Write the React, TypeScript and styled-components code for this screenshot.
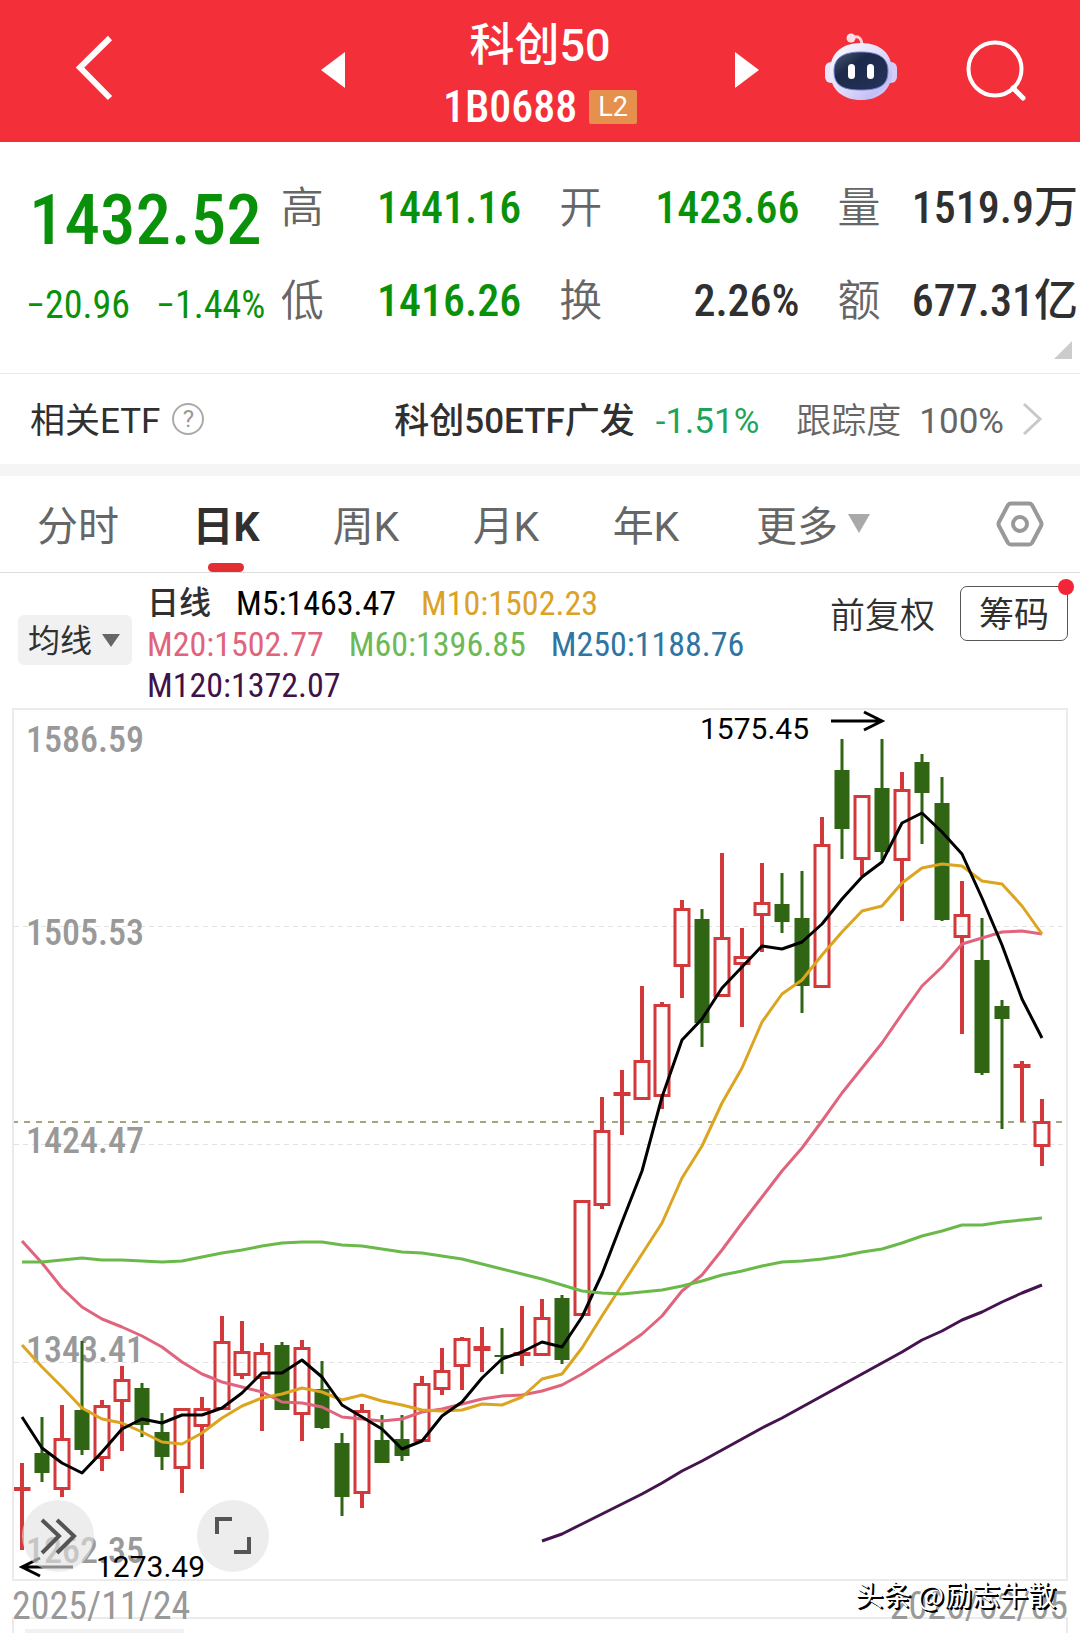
import React from "react";
import styled, { createGlobalStyle, css } from "styled-components";

const textFont = `Roboto, "Noto Sans CJK SC", sans-serif`;
const numberFont = `"Roboto Condensed", Roboto, "Noto Sans CJK SC", sans-serif`;

const color = {
  brand: "#f32f39",
  fall: "#099209",
  ink: "#303030",
  label: "#666",
  axis: "#999",
  line: "#ebebeb",
  up: "#d3393b",
  down: "#2f6513",
};

const GlobalStyle = createGlobalStyle`
  *, *::before, *::after { box-sizing: border-box; }
  body { margin: 0; background: #fff; color: ${color.ink}; font-family: ${textFont}; }
  button, select { font: inherit; color: inherit; background: none; border: 0; padding: 0; margin: 0; }
  h1, p, dl, dd, dt { margin: 0; font-weight: inherit; }
  svg { display: block; }
`;

const Page = styled.main`
  position: relative;
  overflow: hidden;
`;

/* ---------- header ---------- */

const Header = styled.header`
  display: grid;
  grid-template-columns: 1fr 438px 1fr;
  align-items: center;
  height: 142px;
  background: ${color.brand};
  color: #fff;
`;

const BackButton = styled.button`
  justify-self: start;
  margin-left: 74px;
`;

const Switcher = styled.div`
  display: flex;
  align-items: center;
  justify-content: space-between;
`;

const TitleBlock = styled.div`
  display: flex;
  flex-direction: column;
  align-items: center;
  padding-top: 12px;
`;

const Title = styled.h1`
  font-size: 45px;
  line-height: 60px;
  font-weight: 500;
`;

const CodeRow = styled.p`
  display: flex;
  align-items: center;
  gap: 12px;
  font: 500 44px/62px ${numberFont};
`;

const Level = styled.span`
  padding: 0 9px;
  border-radius: 2px;
  background: #e5904c;
  font: 400 27px/34px ${textFont};
`;

const HeaderTools = styled.div`
  display: flex;
  align-items: center;
  justify-content: flex-end;
  gap: 68px;
  padding-right: 54px;
`;

/* ---------- quote ---------- */

const Quote = styled.section`
  position: relative;
  display: flex;
  height: 232px;
  border-bottom: 1px solid ${color.line};
`;

const Headline = styled.div`
  width: 26%;
  padding: 38px 0 0 26px;
  color: ${color.fall};
  font-family: ${numberFont};
  font-weight: 500;
  white-space: nowrap;
`;

const Price = styled.p`
  padding-left: 3px;
  font-size: 71px;
  line-height: 80px;
`;

const Changes = styled.p`
  display: flex;
  gap: 26px;
  margin-top: 25px;
  font-size: 38px;
  line-height: 40px;
  font-weight: 400;
`;

const Stats = styled.dl`
  flex: 1;
  display: grid;
  grid-template-columns: repeat(3, 1fr);
  grid-auto-rows: 93px;
  column-gap: 38px;
  padding: 17px 2px 0 0;
`;

const Stat = styled.div`
  display: flex;
  align-items: center;
  justify-content: space-between;
  white-space: nowrap;
`;

const StatLabel = styled.dt`
  padding-bottom: 4px;
  color: ${color.label};
  font-size: 43px;
  font-weight: 350;
`;

const StatValue = styled.dd<{ $fall?: boolean }>`
  padding-top: 4px;
  color: ${(p) => (p.$fall ? color.fall : color.ink)};
  font: 500 44px/60px ${numberFont};
`;

const Corner = styled.span`
  position: absolute;
  right: 8px;
  bottom: 14px;
  border-left: 18px solid transparent;
  border-bottom: 18px solid #ccc;
`;

/* ---------- related ETF ---------- */

const EtfRow = styled.section`
  display: flex;
  align-items: center;
  height: 102px;
  padding: 0 36px 0 30px;
  border-bottom: 12px solid #f5f5f5;
  font-size: 35px;
  line-height: 48px;
  white-space: nowrap;
`;

const EtfLabel = styled.span`
  padding-top: 5px;
`;

const HelpButton = styled.button`
  width: 32px;
  height: 32px;
  margin-left: 12px;
  border: 2px solid #aaa;
  border-radius: 50%;
  color: #999;
  font-size: 24px;
  line-height: 28px;
`;

const EtfLink = styled.a`
  display: flex;
  align-items: center;
  margin-left: auto;
  color: inherit;
  text-decoration: none;
`;

const EtfTexts = styled.span`
  display: flex;
  align-items: baseline;
  padding-top: 5px;
`;

const EtfName = styled.span`
  font-weight: 500;
`;

const EtfChange = styled.span`
  margin: 0 37px 0 21px;
  color: #1fa35b;
`;

const TrackLabel = styled.span`
  margin-right: 18px;
  color: ${color.label};
  font-weight: 350;
`;

const TrackValue = styled.span`
  margin-right: 18px;
  color: ${color.label};
`;

/* ---------- period tabs ---------- */

const Tabs = styled.nav`
  display: grid;
  grid-template-columns: 156fr 140fr 140fr 140fr 140fr 194fr 170fr;
  height: 97px;
  border-bottom: 1px solid #ddd;
`;

const Tab = styled.button<{ $active?: boolean }>`
  position: relative;
  display: flex;
  align-items: center;
  justify-content: center;
  gap: 10px;
  padding-bottom: 2px;
  color: ${color.label};
  font-size: 41px;
  font-weight: 400;
  ${(p) =>
    p.$active &&
    css`
      color: ${color.ink};
      font-weight: 700;
      &::after {
        content: "";
        position: absolute;
        bottom: 0;
        width: 36px;
        height: 9px;
        border-radius: 5px;
        background: #e12f32;
      }
    `}
`;

const SettingsButton = styled.button`
  justify-self: end;
  margin-right: 36px;
`;

/* ---------- averages ---------- */

const Averages = styled.section`
  display: flex;
  align-items: flex-start;
  height: 135px;
  padding: 10px 12px 0 18px;
`;

const Picker = styled.label`
  position: relative;
  margin-top: 32px;
`;

const PickerSelect = styled.select`
  appearance: none;
  display: block;
  width: 114px;
  height: 50px;
  padding: 2px 0 0 10px;
  border-radius: 6px;
  background: #f1f1f1;
  font-size: 32px;
`;

const PickerArrow = styled.svg`
  position: absolute;
  right: 12px;
  top: 19px;
  pointer-events: none;
`;

const Legend = styled.div`
  flex: 1;
  display: flex;
  flex-wrap: wrap;
  column-gap: 25px;
  padding: 0 42px 0 15px;
  font: 400 34px/41px ${numberFont};
  white-space: nowrap;
`;

const LegendTitle = styled.span`
  font-size: 32px;
  font-weight: 500;
`;

const LegendItem = styled.span<{ $color: string }>`
  color: ${(p) => p.$color};
`;

const Adjust = styled.button`
  height: 42px;
  margin-top: 13px;
  font-size: 35px;
  line-height: 42px;
  font-weight: 350;
`;

const ChipsButton = styled.button`
  position: relative;
  width: 108px;
  height: 55px;
  margin-left: 25px;
  margin-top: 3px;
  border: 1px solid #555;
  border-radius: 7px;
  font-size: 35px;
  line-height: 53px;
  padding-top: 2px;
  &::after {
    content: "";
    position: absolute;
    top: -8px;
    right: -7px;
    width: 16px;
    height: 16px;
    border-radius: 50%;
    background: #f32538;
  }
`;

/* ---------- chart ---------- */

const ChartFrame = styled.section`
  position: relative;
  margin: 0 12px;
  border: 2px solid ${color.line};
`;

const ChartSvg = styled.svg`
  width: 100%;
  height: auto;
`;

const AxisText = styled.text`
  fill: ${color.axis};
  font: 500 36px ${numberFont};
`;

const MarkText = styled.text`
  fill: #000;
  font: 400 30px ${textFont};
`;

const RoundButton = styled.button<{ $left: number }>`
  position: absolute;
  left: ${(p) => p.$left}px;
  bottom: 7px;
  width: 72px;
  height: 72px;
  border-radius: 50%;
  background: rgba(226, 226, 226, 0.62);
`;

const Dates = styled.div`
  position: relative;
  display: flex;
  justify-content: space-between;
  height: 36px;
  margin: 0 12px;
  color: ${color.axis};
  font: 400 38px/50px ${numberFont};
`;

const Watermark = styled.span`
  position: absolute;
  right: 12px;
  top: -7px;
  color: #fff;
  font: 400 28px/40px "Noto Sans CJK SC", sans-serif;
  text-shadow: 1px 1px 0 #000, 2px 2px 0 #000;
`;

const NextPanel = styled.section`
  height: 16px;
  margin: 0 12px;
  padding: 10px 11px 0;
  border: 2px solid ${color.line};
  border-bottom: 0;
`;

const PanelTab = styled.div`
  width: 159px;
  height: 4px;
  background: #f1f1f1;
`;

/* ---------- data ---------- */

type Candle = [kind: "u" | "d", high: number, top: number, bottom: number, low: number];

const candles: Candle[] = [
  ["u", 1463, 1488, 1490, 1550], ["d", 1417, 1453, 1473, 1482], ["u", 1405, 1438, 1490, 1497],
  ["d", 1341, 1410, 1450, 1455], ["u", 1400, 1405, 1459, 1471], ["u", 1366, 1379, 1402, 1451],
  ["d", 1383, 1388, 1425, 1437], ["d", 1413, 1432, 1457, 1470], ["u", 1408, 1408, 1469, 1493],
  ["u", 1397, 1408, 1427, 1469], ["u", 1316, 1341, 1410, 1410], ["u", 1321, 1351, 1376, 1379],
  ["u", 1343, 1352, 1379, 1431], ["d", 1342, 1345, 1410, 1410], ["u", 1340, 1347, 1415, 1441],
  ["d", 1361, 1389, 1428, 1429], ["d", 1433, 1443, 1497, 1516], ["u", 1404, 1410, 1494, 1508],
  ["d", 1415, 1440, 1463, 1463], ["d", 1415, 1439, 1456, 1461], ["u", 1376, 1383, 1442, 1442],
  ["u", 1348, 1370, 1390, 1395], ["u", 1337, 1338, 1367, 1390], ["u", 1327, 1347, 1350, 1372],
  ["d", 1328, 1355, 1357, 1374], ["u", 1306, 1353, 1355, 1366], ["u", 1299, 1317, 1356, 1356],
  ["d", 1295, 1298, 1360, 1364], ["u", 1200, 1200, 1316, 1316], ["u", 1097, 1130, 1206, 1209],
  ["u", 1070, 1093, 1095, 1135], ["u", 986, 1060, 1100, 1100], ["u", 1002, 1004, 1097, 1109],
  ["u", 900, 908, 967, 998], ["d", 909, 919, 1023, 1047], ["u", 853, 937, 997, 997],
  ["u", 928, 956, 965, 1027], ["u", 863, 902, 916, 952], ["d", 873, 904, 922, 933],
  ["d", 871, 918, 986, 1013], ["u", 817, 844, 988, 988], ["d", 739, 770, 829, 859],
  ["u", 795, 795, 860, 876], ["d", 739, 788, 852, 860], ["u", 772, 789, 861, 921],
  ["d", 754, 762, 793, 844], ["d", 777, 803, 920, 921], ["u", 881, 914, 938, 1034],
  ["d", 918, 960, 1073, 1075], ["d", 1000, 1006, 1019, 1129], ["u", 1061, 1065, 1067, 1122],
  ["u", 1099, 1121, 1147, 1166],
];

const averages = [
  {
    stroke: "#e0647c", width: 3, start: 0,
    ys: [1241, 1263, 1288, 1307, 1319, 1327, 1336, 1347, 1362, 1374, 1382, 1387, 1392, 1402, 1403, 1407, 1417, 1419, 1421, 1419, 1412, 1409, 1404, 1399, 1396, 1395, 1391, 1385, 1374, 1361, 1348, 1334, 1316, 1291, 1275, 1250, 1223, 1197, 1171, 1148, 1121, 1093, 1068, 1043, 1014, 986, 967, 944, 938, 932, 931, 934],
  },
  {
    stroke: "#dba520", width: 3, start: 0,
    ys: [1345, 1367, 1387, 1408, 1419, 1423, 1432, 1442, 1444, 1433, 1418, 1406, 1398, 1394, 1388, 1392, 1400, 1395, 1401, 1405, 1410, 1411, 1410, 1404, 1405, 1397, 1379, 1374, 1348, 1316, 1285, 1254, 1223, 1178, 1146, 1103, 1068, 1022, 994, 980, 955, 932, 911, 906, 883, 868, 864, 866, 881, 884, 906, 934],
  },
  {
    stroke: "#000", width: 3, start: 0,
    ys: [1417, 1448, 1463, 1473, 1452, 1429, 1419, 1423, 1415, 1415, 1408, 1393, 1373, 1373, 1360, 1377, 1405, 1417, 1429, 1449, 1441, 1416, 1402, 1378, 1359, 1352, 1342, 1347, 1317, 1274, 1222, 1171, 1097, 1040, 1019, 988, 967, 946, 949, 942, 924, 899, 877, 862, 823, 813, 832, 854, 898, 945, 999, 1038],
  },
  {
    stroke: "#6cb94b", width: 3, start: 0,
    ys: [1262, 1262, 1260, 1258, 1260, 1260, 1261, 1262, 1261, 1257, 1253, 1250, 1246, 1243, 1242, 1242, 1245, 1246, 1249, 1252, 1253, 1256, 1259, 1264, 1269, 1274, 1279, 1285, 1291, 1293, 1294, 1292, 1290, 1286, 1281, 1275, 1271, 1266, 1262, 1261, 1259, 1256, 1252, 1249, 1243, 1236, 1231, 1225, 1225, 1222, 1220, 1218],
  },
  {
    stroke: "#45134e", width: 3, start: 26,
    ys: [1541, 1534, 1524, 1514, 1504, 1494, 1483, 1471, 1461, 1450, 1439, 1428, 1418, 1407, 1396, 1385, 1374, 1363, 1352, 1340, 1331, 1320, 1312, 1302, 1293, 1285],
  },
];

const xAt = (i: number) => 22 + 20 * i;

const axisLabels: [string, number][] = [
  ["1586.59", 752], ["1505.53", 945], ["1424.47", 1153], ["1343.41", 1362], ["1262.35", 1563],
];

const legend: [string, string][] = [
  ["M5:1463.47", "#000"], ["M10:1502.23", "#dba226"],
  ["M20:1502.77", "#e0647c"], ["M60:1396.85", "#6cb955"], ["M250:1188.76", "#2f75a3"],
  ["M120:1372.07", "#40124a"],
];

const stats: [string, string, boolean][] = [
  ["高", "1441.16", true], ["开", "1423.66", true], ["量", "1519.9万", false],
  ["低", "1416.26", true], ["换", "2.26%", false], ["额", "677.31亿", false],
];

/* ---------- drawings ---------- */

const Robot = () => (
  <svg width="72" height="76" viewBox="0 0 72 76" aria-hidden="true">
    <defs>
      <linearGradient id="shell" x1="0" y1="0" x2="1" y2="1">
        <stop offset="0" stopColor="#fff" />
        <stop offset="0.55" stopColor="#dcd8fa" />
        <stop offset="0.8" stopColor="#c4bff5" />
        <stop offset="1" stopColor="#f5cfe6" />
      </linearGradient>
      <linearGradient id="visor" x1="0" y1="0" x2="1" y2="1">
        <stop offset="0" stopColor="#4c5877" />
        <stop offset="0.35" stopColor="#1d2949" />
        <stop offset="1" stopColor="#25335c" />
      </linearGradient>
    </defs>
    <path d="M27 5 C33 2 37 5 37 13" fill="none" stroke="#f8cfdc" strokeWidth="3" />
    <circle cx="26" cy="5" r="4.5" fill="#fbdde5" />
    <rect x="0" y="29" width="12" height="21" rx="6" fill="#e9e4fc" />
    <rect x="60" y="29" width="12" height="21" rx="6" fill="#d3ccf6" />
    <path d="M36 10 C56 10 67 21 67 38 C67 57 54 67 36 67 C18 67 5 57 5 38 C5 21 16 10 36 10Z" fill="url(#shell)" />
    <path d="M36 19 C54 19 63 25 63 38 C63 52 55 57 36 57 C17 57 9 52 9 38 C9 25 18 19 36 19Z" fill="url(#visor)" stroke="#7381cf" strokeWidth="1" />
    <rect x="23" y="31" width="7" height="15" rx="3.5" fill="#fff" />
    <rect x="42" y="31" width="7" height="15" rx="3.5" fill="#fff" />
  </svg>
);

const CandleMark = ({ data, index }: { data: Candle; index: number }) => {
  const [kind, high, top, bottom, low] = data;
  const x = xAt(index);
  if (kind === "d") {
    return (
      <g fill={color.down}>
        <rect x={x - 1.5} y={high} width="3" height={low - high} />
        <rect x={x - 7.5} y={top} width="15" height={bottom - top} />
      </g>
    );
  }
  const flat = bottom - top < 6;
  return (
    <g fill={color.up}>
      <rect x={x - 2} y={high} width="4" height={top - high} />
      <rect x={x - 2} y={bottom} width="4" height={low - bottom} />
      {flat ? (
        <rect x={x - 8.5} y={top - 1} width="17" height={bottom - top + 2} />
      ) : (
        <rect x={x - 7} y={top + 1.5} width="14" height={bottom - top - 3} fill="none" stroke={color.up} strokeWidth="3" />
      )}
    </g>
  );
};

const Chart = () => (
  <ChartSvg viewBox="14 710 1052 869" role="img" aria-label="日K">
    <g stroke="#e2e2e2" strokeWidth="1" strokeDasharray="5 4">
      <line x1="14" x2="1066" y1="926.5" y2="926.5" />
      <line x1="14" x2="1066" y1="1144.5" y2="1144.5" />
      <line x1="14" x2="1066" y1="1362.5" y2="1362.5" />
    </g>
    <line x1="12" x2="1066" y1="1122" y2="1122" stroke="#a5a47a" strokeWidth="2" strokeDasharray="6 6" />
    {axisLabels.map(([label, y]) => (
      <AxisText key={label} x="26" y={y}>{label}</AxisText>
    ))}
    {candles.map((c, i) => (
      <CandleMark key={i} data={c} index={i} />
    ))}
    {averages.map((a) => (
      <polyline
        key={a.stroke}
        points={a.ys.map((y, i) => `${xAt(i + a.start)},${y}`).join(" ")}
        fill="none"
        stroke={a.stroke}
        strokeWidth={a.width}
        strokeLinejoin="round"
      />
    ))}
    <MarkText x="700" y="739">1575.45</MarkText>
    <path d="M831 721H881M864 712L882 721L864 730" fill="none" stroke="#000" strokeWidth="3" />
    <MarkText x="96" y="1577">1273.49</MarkText>
    <path d="M73 1567H23M40 1558L22 1567L40 1576" fill="none" stroke="#000" strokeWidth="3" />
  </ChartSvg>
);

export default function App() {
  return (
    <Page>
      <GlobalStyle />
      <Header>
        <BackButton aria-label="返回">
          <svg width="40" height="72" viewBox="0 0 40 72" fill="none" stroke="#fff" strokeWidth="6">
            <path d="M36 3L6 32.500L36 63" />
          </svg>
        </BackButton>
        <Switcher>
          <button aria-label="上一个">
            <svg width="24" height="38"><path d="M0 18L24 0V36Z" fill="#fff" /></svg>
          </button>
          <TitleBlock>
            <Title>科创50</Title>
            <CodeRow>1B0688<Level>L2</Level></CodeRow>
          </TitleBlock>
          <button aria-label="下一个">
            <svg width="24" height="38"><path d="M24 18L0 0V36Z" fill="#fff" /></svg>
          </button>
        </Switcher>
        <HeaderTools>
          <button aria-label="智能助手"><Robot /></button>
          <button aria-label="搜索">
            <svg width="61" height="62" viewBox="0 0 61 62" fill="none" stroke="#fff" strokeWidth="4">
              <circle cx="30" cy="29" r="26.500" />
              <path d="M48 48L58 58" strokeWidth="5" strokeLinecap="round" />
            </svg>
          </button>
        </HeaderTools>
      </Header>

      <Quote>
        <Headline>
          <Price>1432.52</Price>
          <Changes><span>−20.96</span><span>−1.44%</span></Changes>
        </Headline>
        <Stats>
          {stats.map(([label, value, fall]) => (
            <Stat key={label}>
              <StatLabel>{label}</StatLabel>
              <StatValue $fall={fall}>{value}</StatValue>
            </Stat>
          ))}
        </Stats>
        <Corner />
      </Quote>

      <EtfRow>
        <EtfLabel>相关ETF</EtfLabel>
        <HelpButton aria-label="说明">?</HelpButton>
        <EtfLink href="#etf">
          <EtfTexts>
            <EtfName>科创50ETF广发</EtfName>
            <EtfChange>-1.51%</EtfChange>
            <TrackLabel>跟踪度</TrackLabel>
            <TrackValue>100%</TrackValue>
          </EtfTexts>
          <svg width="22" height="34" viewBox="0 0 22 34" fill="none" stroke="#c8c8c8" strokeWidth="3">
            <path d="M2 2L18 17L2 32" />
          </svg>
        </EtfLink>
      </EtfRow>

      <Tabs>
        <Tab>分时</Tab>
        <Tab $active>日K</Tab>
        <Tab>周K</Tab>
        <Tab>月K</Tab>
        <Tab>年K</Tab>
        <Tab>
          更多
          <svg width="22" height="19"><path d="M0 0H22L11 19Z" fill="#a9a9a9" /></svg>
        </Tab>
        <SettingsButton aria-label="设置">
          <svg width="48" height="48" viewBox="0 0 48 48" fill="none" stroke="#999" strokeWidth="4" strokeLinejoin="round">
            <path d="M15 3.500H33Q35 3.500 36 5L45 22Q46 24 45 26L36 43Q35 44.500 33 44.500H15Q13 44.500 12 43L3 26Q2 24 3 22L12 5Q13 3.500 15 3.500Z" />
            <circle cx="24" cy="24" r="7" />
          </svg>
        </SettingsButton>
      </Tabs>

      <Averages>
        <Picker>
          <PickerSelect aria-label="指标" defaultValue="均线">
            <option>均线</option>
          </PickerSelect>
          <PickerArrow width="18" height="13"><path d="M0 0H18L9 13Z" fill="#666" /></PickerArrow>
        </Picker>
        <Legend>
          <LegendTitle>日线</LegendTitle>
          {legend.map(([text, c]) => (
            <LegendItem key={text} $color={c}>{text}</LegendItem>
          ))}
        </Legend>
        <Adjust>前复权</Adjust>
        <ChipsButton>筹码</ChipsButton>
      </Averages>

      <ChartFrame>
        <Chart />
        <RoundButton $left={8} aria-label="展开">
          <svg width="72" height="72" viewBox="0 0 72 72" fill="none" stroke="#555" strokeWidth="4">
            <path d="M20 20L37 36L20 53M35 20L52 36L35 53" />
          </svg>
        </RoundButton>
        <RoundButton $left={183} aria-label="全屏">
          <svg width="72" height="72" viewBox="0 0 72 72" fill="none" stroke="#555" strokeWidth="4">
            <path d="M20 34V19H35M52 37V52H37" />
          </svg>
        </RoundButton>
      </ChartFrame>
      <Dates>
        <span>2025/11/24</span>
        <span>2026/02/05</span>
        <Watermark>头条 @励志牛散</Watermark>
      </Dates>
      <NextPanel><PanelTab /></NextPanel>
    </Page>
  );
}
